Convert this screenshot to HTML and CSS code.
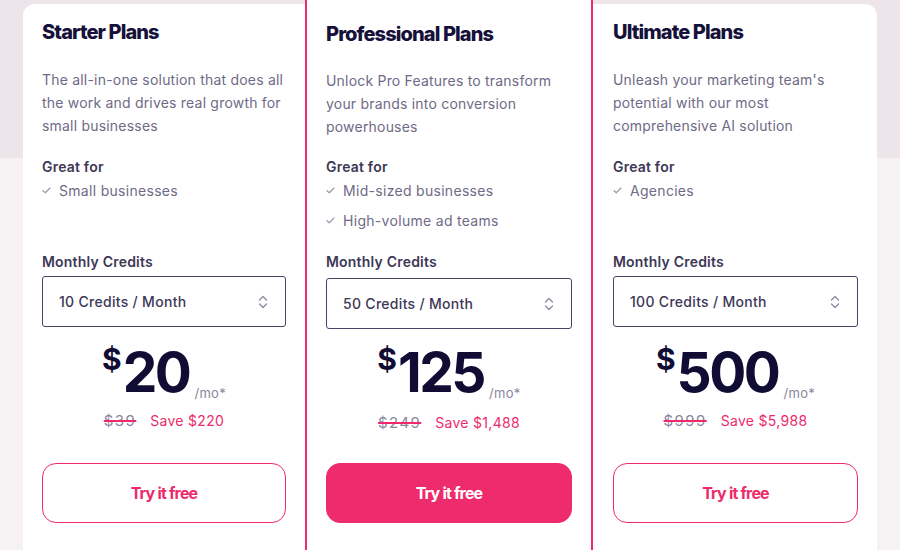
FILE: index.html
```html
<!DOCTYPE html>
<html lang="en">
<head>
<meta charset="utf-8">
<title>Plans</title>
<link rel="stylesheet" href="styles.css">
</head>
<body>
<main class="plans">
  <section class="card card-starter">
    <h2 class="title">Starter Plans</h2>
    <p class="desc">The all-in-one solution that does all the work and drives real growth for small businesses</p>
    <div class="great">
      <h3 class="label">Great for</h3>
      <ul class="list">
        <li><svg class="check" viewBox="0 0 10 8" width="9" height="7"><path d="M1 4.2 3.6 6.6 9 1.2" fill="none" stroke="#9c98ab" stroke-width="1.4" stroke-linecap="round" stroke-linejoin="round"/></svg>Small businesses</li>
      </ul>
    </div>
    <h3 class="label">Monthly Credits</h3>
    <div class="select"><span>10 Credits / Month</span><svg class="chev" viewBox="0 0 10 16" width="10" height="16"><path d="M1.5 6 5 2.5 8.5 6M1.5 10 5 13.5 8.5 10" fill="none" stroke="#8e8a9e" stroke-width="1.3" stroke-linecap="round" stroke-linejoin="round"/></svg></div>
    <div class="price"><span class="cur">$</span><span class="amt">20</span><span class="per">/mo*</span></div>
    <div class="save"><s class="old">$39</s><span class="off">Save $220</span></div>
    <a class="btn" href="#">Try it free</a>
  </section>
  <section class="card card-pro">
    <h2 class="title">Professional Plans</h2>
    <p class="desc">Unlock Pro Features to transform your brands into conversion powerhouses</p>
    <div class="great">
      <h3 class="label">Great for</h3>
      <ul class="list">
        <li><svg class="check" viewBox="0 0 10 8" width="9" height="7"><path d="M1 4.2 3.6 6.6 9 1.2" fill="none" stroke="#9c98ab" stroke-width="1.4" stroke-linecap="round" stroke-linejoin="round"/></svg>Mid-sized businesses</li>
        <li><svg class="check" viewBox="0 0 10 8" width="9" height="7"><path d="M1 4.2 3.6 6.6 9 1.2" fill="none" stroke="#9c98ab" stroke-width="1.4" stroke-linecap="round" stroke-linejoin="round"/></svg>High-volume ad teams</li>
      </ul>
    </div>
    <h3 class="label">Monthly Credits</h3>
    <div class="select"><span>50 Credits / Month</span><svg class="chev" viewBox="0 0 10 16" width="10" height="16"><path d="M1.5 6 5 2.5 8.5 6M1.5 10 5 13.5 8.5 10" fill="none" stroke="#8e8a9e" stroke-width="1.3" stroke-linecap="round" stroke-linejoin="round"/></svg></div>
    <div class="price"><span class="cur">$</span><span class="amt">125</span><span class="per">/mo*</span></div>
    <div class="save"><s class="old">$249</s><span class="off">Save $1,488</span></div>
    <a class="btn btn-fill" href="#">Try it free</a>
  </section>
  <section class="card card-ultimate">
    <h2 class="title">Ultimate Plans</h2>
    <p class="desc">Unleash your marketing team's potential with our most comprehensive AI solution</p>
    <div class="great">
      <h3 class="label">Great for</h3>
      <ul class="list">
        <li><svg class="check" viewBox="0 0 10 8" width="9" height="7"><path d="M1 4.2 3.6 6.6 9 1.2" fill="none" stroke="#9c98ab" stroke-width="1.4" stroke-linecap="round" stroke-linejoin="round"/></svg>Agencies</li>
      </ul>
    </div>
    <h3 class="label">Monthly Credits</h3>
    <div class="select"><span>100 Credits / Month</span><svg class="chev" viewBox="0 0 10 16" width="10" height="16"><path d="M1.5 6 5 2.5 8.5 6M1.5 10 5 13.5 8.5 10" fill="none" stroke="#8e8a9e" stroke-width="1.3" stroke-linecap="round" stroke-linejoin="round"/></svg></div>
    <div class="price"><span class="cur">$</span><span class="amt">500</span><span class="per">/mo*</span></div>
    <div class="save"><s class="old">$999</s><span class="off">Save $5,988</span></div>
    <a class="btn" href="#">Try it free</a>
  </section>
</main>
</body>
</html>
```
FILE: styles.css
```css
* { box-sizing: border-box; }
html, body { margin: 0; height: 100%; }
body {
  overflow: hidden;
  font-family: Inter, "Noto Sans", sans-serif;
  background: linear-gradient(to bottom, #ede5ea 0, #ede5ea 158px, #f6f2f4 158px);
}
.plans {
  display: flex;
  align-items: flex-start;
  padding: 4px 0 0 23px;
}
.card {
  background: #fff;
  height: 580px;
  padding: 14px 19px 0 19px;
}
.card-starter { width: 282px; border-radius: 12px 0 0 12px; }
.card-pro {
  width: 288px;
  margin-top: -20px;
  height: 600px;
  padding-top: 34px;
  border: 2px solid #ee2a6b;
  border-radius: 12px;
}
.card-ultimate { width: 284px; padding-left: 20px; border-radius: 0 12px 12px 0; }

.title {
  margin: 0;
  font-size: 20px;
  line-height: 28px;
  font-weight: 800;
  letter-spacing: -0.9px;
  color: #15113a;
}
.desc {
  margin: 22px 0 0;
  font-size: 14px;
  line-height: 23px;
  letter-spacing: 0.2px;
  color: #6f6a86;
}
.card-pro .desc { margin-top: 21px; }
.great { margin-top: 20px; height: 95px; }
.card-pro .great { margin-top: 19px; }
.label {
  margin: 0;
  font-size: 14px;
  line-height: 20px;
  font-weight: 600;
  letter-spacing: 0.2px;
  color: #3d3856;
}
.list { list-style: none; margin: 3px 0 0; padding: 0; }
.list li {
  display: flex;
  align-items: center;
  height: 20px;
  margin-bottom: 10px;
  font-size: 14px;
  letter-spacing: 0.3px;
  color: #6f6a86;
}
.check { margin-right: 8px; flex: none; }
.select {
  margin-top: 4px;
  height: 51px;
  border: 1.5px solid #4b4266;
  border-radius: 3px;
  display: flex;
  align-items: center;
  justify-content: space-between;
  padding: 0 17px 0 16px;
  font-size: 14px;
  font-weight: 500;
  letter-spacing: 0.3px;
  color: #3d3856;
}
.card-pro .select { margin-top: 6px; }
.price {
  display: flex;
  justify-content: center;
  align-items: flex-end;
  margin-top: 19px;
  height: 50px;
  color: #110c33;
}
.card-pro .price { margin-top: 17px; }
.cur {
  align-self: flex-start;
  font-size: 30px;
  line-height: 30px;
  font-weight: 700;
  margin-right: 1px;
  margin-top: -2px;
}
.amt {
  font-size: 55px;
  line-height: 48px;
  font-weight: 700;
  letter-spacing: -2.5px;
}
.per {
  font-size: 13px;
  color: #8a86a0;
  margin-left: 5px;
  margin-bottom: -4px;
  line-height: 13px;
  letter-spacing: 0.3px;
}
.save {
  display: flex;
  justify-content: center;
  align-items: center;
  gap: 14px;
  margin-top: 15px;
  height: 20px;
  font-size: 14px;
  line-height: 20px;
  letter-spacing: 0.3px;
}
.old {
  color: #8a86a0;
  font-size: 15px;
  letter-spacing: 1.4px;
  text-decoration-color: #ee2a6b;
  text-decoration-thickness: 1.5px;
}
.off { color: #ee2a6b; }
.card-pro .save { margin-top: 17px; }
.btn {
  display: flex;
  align-items: center;
  justify-content: center;
  margin-top: 32px;
  height: 60px;
  border: 1.5px solid #ee2a6b;
  border-radius: 14px;
  color: #ee2a6b;
  font-size: 16px;
  font-weight: 700;
  letter-spacing: -0.8px;
  text-decoration: none;
}
.card-pro .btn { margin-top: 30px; }
.btn-fill { background: #ee2b6c; color: #fff; }
```
